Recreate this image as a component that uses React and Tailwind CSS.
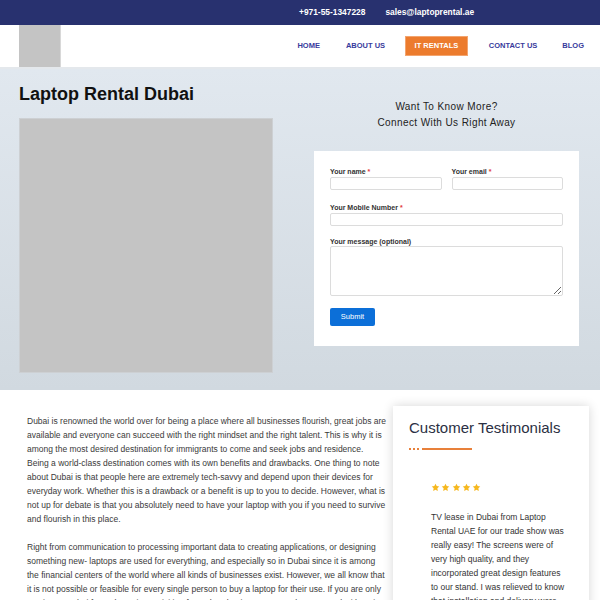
import React from "react";

const Star = () => (
  <svg width="9" height="9" viewBox="0 0 24 24" className="shrink-0">
    <path d="M12 2l3.09 6.26L22 9.27l-5 4.87 1.18 6.88L12 17.77l-6.18 3.25L7 14.14 2 9.27l6.91-1.01L12 2z" fill="#f6b81f" />
  </svg>
);

export default function App() {
  const font = { fontFamily: '"Liberation Sans", Arial, sans-serif' };
  return (
    <div className="w-[600px] h-[600px] overflow-hidden bg-white" style={font}>
      {/* top bar */}
      <div className="h-[25px] bg-[#28316f] flex items-center pl-[299px] gap-[20px] text-white text-[8.4px] font-bold">
        <span>+971-55-1347228</span>
        <span>sales@laptoprental.ae</span>
      </div>
      {/* header */}
      <div className="h-[44px] bg-white flex items-stretch border-b-2 border-[#e4e8ec]">
        <div className="ml-[19px] w-[42px] bg-[#c4c4c4] border-r border-[#d8d8d8]" />
        <nav className="ml-auto pr-[16px] flex items-center text-[7.5px] font-bold text-[#383a9c] uppercase">
          <span>Home</span>
          <span className="ml-[26px]">About Us</span>
          <span className="ml-[20px] h-[20px] px-[8.5px] flex items-center bg-[#ec7b2d] text-white border border-[#f3a46e]">IT Rentals</span>
          <span className="ml-[21px]">Contact Us</span>
          <span className="ml-[25px]">Blog</span>
        </nav>
      </div>
      {/* hero */}
      <div className="h-[321px] bg-gradient-to-b from-[#e1e8ef] to-[#d1d9e0] flex px-[19px]">
        <div className="w-[254px] pt-[15px]">
          <h1 className="text-[18px] leading-[21px] font-bold text-[#111]">Laptop Rental Dubai</h1>
          <div className="mt-[13px] h-[255px] bg-[#c4c4c4] border border-[#cdd0d3]" />
        </div>
        <div className="ml-[41px] w-[265px] pt-[30px]">
          <div className="text-center text-[10px] leading-[16px] tracking-[0.4px] text-[#222]">
            <div>Want To Know More?</div>
            <div>Connect With Us Right Away</div>
          </div>
          <div className="mt-[20px] bg-white px-[16px] pt-[16px] pb-[20px] text-[7px] font-bold text-[#333]">
            <div className="grid grid-cols-2 gap-x-[10px]">
              <div>
                <div className="leading-[9px]">Your name <span className="text-[#e23b3b]">*</span></div>
                <div className="mt-[1px] h-[13px] border border-[#dcdcdc] rounded-[2px]" />
              </div>
              <div>
                <div className="leading-[9px]">Your email <span className="text-[#e23b3b]">*</span></div>
                <div className="mt-[1px] h-[13px] border border-[#dcdcdc] rounded-[2px]" />
              </div>
            </div>
            <div className="mt-[13px] leading-[9px]">Your Mobile Number <span className="text-[#e23b3b]">*</span></div>
            <div className="mt-[1px] h-[13px] border border-[#dcdcdc] rounded-[2px]" />
            <div className="mt-[10.5px] leading-[9px]">Your message (optional)</div>
            <textarea className="block mt-[0.5px] w-full h-[50px] border border-[#dcdcdc] rounded-[2px] outline-none" />
            <button className="mt-[12px] w-[45px] h-[18px] bg-[#0c6fd8] text-white text-[7.5px] font-normal rounded-[2px] flex items-center justify-center">Submit</button>
          </div>
        </div>
      </div>
      {/* body */}
      <div className="flex pt-[16px]">
        <div className="ml-[27px] w-[360px] pt-[8px] text-[8.5px] leading-[14px] text-[#3a3a3a]">
          <p>
            Dubai is renowned the world over for being a place where all businesses flourish, great jobs are available and everyone can succeed with the right mindset and the right talent. This is why it is among the most desired destination for immigrants to come and seek jobs and residence. Being a world-class destination comes with its own benefits and drawbacks. One thing to note about Dubai is that people here are extremely tech-savvy and depend upon their devices for everyday work. Whether this is a drawback or a benefit is up to you to decide. However, what is not up for debate is that you absolutely need to have your laptop with you if you need to survive and flourish in this place.
          </p>
          <p className="mt-[14px]">
            Right from communication to processing important data to creating applications, or designing something new- laptops are used for everything, and especially so in Dubai since it is among the financial centers of the world where all kinds of businesses exist. However, we all know that it is not possible or feasible for every single person to buy a laptop for their use. If you are only coming to Dubai for a short trip, or visiting for a short business event, a laptop rental with us is the best way to go.
          </p>
        </div>
        <div className="ml-[6px] w-[196px] h-[300px] bg-white shadow-[0_0_10px_rgba(0,0,0,0.16)] pl-[16px] pr-[21px] pt-[12px]">
          <div className="text-[15px] leading-[20px] text-[#2b3043]">Customer Testimonials</div>
          <div className="mt-[10px] flex items-center">
            <span className="w-[1.5px] h-[1.5px] bg-[#e8803a]" />
            <span className="ml-[2.5px] w-[1.5px] h-[1.5px] bg-[#e8803a]" />
            <span className="ml-[2.5px] w-[1.5px] h-[1.5px] bg-[#e8803a]" />
            <span className="ml-[3px] w-[50px] h-[2px] bg-[#e8803a]" />
          </div>
          <div className="pl-[22px]">
            <div className="mt-[33px] flex gap-[1.3px]">
              <Star /><Star /><Star /><Star /><Star />
            </div>
            <p className="mt-[18px] text-[8.5px] leading-[14px] text-[#333]">
              TV lease in Dubai from Laptop Rental UAE for our trade show was really easy! The screens were of very high quality, and they incorporated great design features to our stand. I was relieved to know that installation and delivery were included.
            </p>
          </div>
        </div>
      </div>
    </div>
  );
}
